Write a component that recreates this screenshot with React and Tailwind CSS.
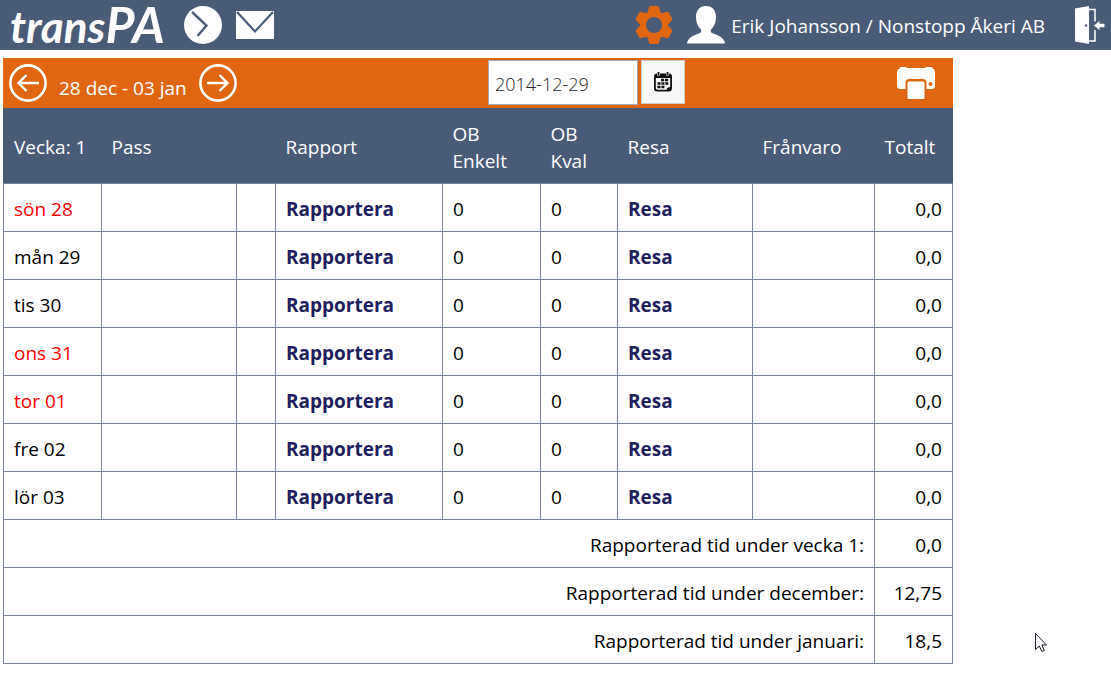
import { useState } from 'react'

const DAYS = [
  { label: 'sön 28', holiday: true },
  { label: 'mån 29' },
  { label: 'tis 30' },
  { label: 'ons 31', holiday: true },
  { label: 'tor 01', holiday: true },
  { label: 'fre 02' },
  { label: 'lör 03' },
]

const SUMMARY = [
  { label: 'Rapporterad tid under vecka 1:', total: '0,0' },
  { label: 'Rapporterad tid under december:', total: '12,75' },
  { label: 'Rapporterad tid under januari:', total: '18,5' },
]

const cell = 'border border-[#77839b] px-[10px] pt-[3px]'

function ClockIcon() {
  return (
    <svg width="38" height="38" viewBox="0 0 38 38">
      <circle cx="19" cy="19" r="19" fill="#fff" />
      <path d="M8 6 L22.5 19.5 L13.5 30" fill="none" stroke="#4a5b77" strokeWidth="2.4" />
    </svg>
  )
}

function MailIcon() {
  return (
    <svg width="38" height="28" viewBox="0 0 38 28">
      <rect width="38" height="28" fill="#fff" />
      <path d="M1 1 L19 20.5 L37 1" fill="none" stroke="#4a5b77" strokeWidth="2.2" />
    </svg>
  )
}

function GearIcon() {
  return (
    <svg width="36" height="38" viewBox="0 0 36 38">
      <g fill="#e16611">
        <path id="tooth" d="M11 8 L13 1.5 Q13.3 0 14.5 0 H21.5 Q22.7 0 23 1.5 L25 8 V30 L23 36.500 Q22.7 38 21.5 38 H14.500 Q13.3 38 13 36.5 L11 30 Z" />
        <use href="#tooth" transform="rotate(60 18 19)" />
        <use href="#tooth" transform="rotate(120 18 19)" />
        <circle cx="18" cy="19" r="14" />
      </g>
      <circle cx="18" cy="19" r="8" fill="#4a5b77" />
    </svg>
  )
}

function UserIcon() {
  return (
    <svg width="38" height="38" viewBox="0 0 38 38">
      <path
        d="M19 0 C25.5 0 29 4.5 29 11 C29 16 27.3 20.5 24.5 23 C23.2 24.2 23.5 26.5 25.5 27.3 C31 29.4 37 31 38 37.5 H0 C1 31 7 29.4 12.5 27.3 C14.5 26.5 14.8 24.2 13.5 23 C10.7 20.5 9 16 9 11 C9 4.5 12.5 0 19 0 Z"
        fill="#fff"
      />
    </svg>
  )
}

function DoorIcon() {
  return (
    <svg width="31" height="38" viewBox="0 0 31 38">
      <path d="M1 2.5 L15 0 V38 L1 35.5 Z" fill="#fff" />
      <circle cx="12" cy="19.5" r="1.2" fill="#4a5b77" />
      <path d="M15 3.5 H21 V15.5 M21 24 V35 H15" fill="none" stroke="#fff" strokeWidth="1.5" />
      <path d="M20 19.5 L25.5 15 V17.8 H30.5 V21.2 H25.5 V24 Z" fill="#fff" />
    </svg>
  )
}

function ArrowIcon({ right }) {
  return (
    <svg width="38" height="38" viewBox="0 0 38 38" fill="none" stroke="#fff">
      <circle cx="19" cy="19" r="17.6" strokeWidth="2.6" />
      <path
        d={right ? 'M8 19 H29 M20.5 11 L28.5 19 L20.5 27' : 'M30 19 H9 M17.5 11 L9.5 19 L17.5 27'}
        strokeWidth="2.4"
      />
    </svg>
  )
}

function CalendarIcon() {
  return (
    <svg width="18" height="20" viewBox="0 0 18 20">
      <path
        d="M3 1.500 H15 Q18 1.500 18 4.500 V16 Q18 19.500 14.500 19.500 H3 Q0 19.500 0 16.500 V4.500 Q0 1.500 3 1.500 Z M1.800 6 V16 Q1.800 17.800 3.600 17.800 H12.500 Q13 15.200 16.200 15 V6 Z"
        fill="#111"
        fillRule="evenodd"
      />
      <path d="M4.500 0 V3.500 M13.500 0 V3.500" stroke="#f8f8f8" strokeWidth="3" />
      <path d="M4.500 0 V3 M13.500 0 V3" stroke="#111" strokeWidth="1.800" />
      <path d="M7 8 H15 M3.500 11.500 H15 M3.500 15 H10.500" stroke="#111" strokeWidth="2.400" strokeDasharray="3 0.900" />
    </svg>
  )
}

function PrinterIcon() {
  return (
    <svg width="38" height="33" viewBox="0 0 38 33">
      <path
        d="M3 1 Q3 0 4 0 H8 Q9 0 10 1 H28 Q29 0 30 0 H34 Q35 0 35.5 1 Q38 2.5 38 5 V19 Q38 22 35 22 H29.5 V15.5 Q29.5 12 26 12 H12 Q8.5 12 8.5 15.5 V22 H3 Q0 22 0 19 V5 Q0 2.5 3 1 Z"
        fill="#fff"
      />
      <circle cx="33.5" cy="17" r="2" fill="#e16611" />
      <rect x="10.5" y="14.5" width="17" height="17.5" rx="1.5" fill="#fff" />
    </svg>
  )
}

function TopBar() {
  return (
    <header className="flex h-[50px] items-center justify-between bg-[#4a5b77] pl-[10px] pr-[6px] text-white">
      <div className="flex items-center">
        <a href="#" className="flex w-[174px] items-baseline font-['Lato',sans-serif] text-[44px] leading-[56px] font-bold italic">
          trans<span className="text-[50px]">PA</span>
        </a>
        <a href="#tid" aria-label="Tid" className="mr-[14px]"><ClockIcon /></a>
        <a href="#meddelanden" aria-label="Meddelanden"><MailIcon /></a>
      </div>
      <div className="flex items-center">
        <a href="#installningar" aria-label="Inställningar" className="mr-[15px]"><GearIcon /></a>
        <a href="#profil" className="mr-[29px] flex items-center gap-[6px]">
          <UserIcon />
          <span className="pt-[2px]">Erik Johansson / Nonstopp Åkeri AB</span>
        </a>
        <a href="#logga-ut" aria-label="Logga ut"><DoorIcon /></a>
      </div>
    </header>
  )
}

function WeekBar() {
  const [date, setDate] = useState('2014-12-29')

  return (
    <div className="flex h-[50px] items-center bg-[#e16611] text-white">
      <div className="flex w-1/2 items-end gap-3 pl-[6px]">
        <button type="button" aria-label="Föregående vecka"><ArrowIcon /></button>
        <span>28 dec - 03 jan</span>
        <button type="button" aria-label="Nästa vecka"><ArrowIcon right /></button>
      </div>
      <div className="flex flex-1 gap-[3px] pb-px pl-[10px]">
        <input
          type="text"
          aria-label="Datum"
          value={date}
          onChange={(e) => setDate(e.target.value)}
          className="h-[45px] w-[150px] border border-[#a0aabb] bg-white px-[6px] pt-[2px] text-lg font-light text-[#222]"
        />
        <button
          type="button"
          aria-label="Välj datum"
          className="flex h-11 w-11 items-center justify-center border border-[#cccccc] bg-[#f8f8f8]"
        >
          <CalendarIcon />
        </button>
      </div>
      <button type="button" aria-label="Skriv ut" className="mr-[18px]"><PrinterIcon /></button>
    </div>
  )
}

function WeekTable() {
  return (
    <table className="w-full table-fixed border-collapse">
      <colgroup>
        <col className="w-[98px]" />
        <col className="w-[135px]" />
        <col className="w-[39px]" />
        <col className="w-[167px]" />
        <col className="w-[98px]" />
        <col className="w-[77px]" />
        <col className="w-[135px]" />
        <col className="w-[122px]" />
        <col className="w-[78px]" />
      </colgroup>
      <thead>
        <tr className="h-[75px] border border-[#4a5b77] bg-[#4a5b77] text-left leading-[27px] text-white [&>th]:px-[10px] [&>th]:pt-[3px] [&>th]:font-normal">
          <th className="whitespace-nowrap">Vecka: 1</th>
          <th>Pass</th>
          <th></th>
          <th>Rapport</th>
          <th>OB Enkelt</th>
          <th>OB Kval</th>
          <th>Resa</th>
          <th>Frånvaro</th>
          <th>Totalt</th>
        </tr>
      </thead>
      <tbody>
        {DAYS.map((d) => (
          <tr key={d.label} className="h-12">
            <td className={`${cell} ${d.holiday ? 'text-[#ff0000]' : ''}`}>{d.label}</td>
            <td className={cell}></td>
            <td className={cell}></td>
            <td className={cell}><a href="#rapportera" className="font-bold text-[#20205f]">Rapportera</a></td>
            <td className={cell}>0</td>
            <td className={cell}>0</td>
            <td className={cell}><a href="#resa" className="font-bold text-[#20205f]">Resa</a></td>
            <td className={cell}></td>
            <td className={`${cell} text-right`}>0,0</td>
          </tr>
        ))}
        {SUMMARY.map((s) => (
          <tr key={s.label} className="h-12 text-right">
            <td colSpan={8} className={cell}>{s.label}</td>
            <td className={cell}>{s.total}</td>
          </tr>
        ))}
      </tbody>
    </table>
  )
}

export default function App() {
  return (
    <div className="min-h-screen bg-white font-['Open_Sans',sans-serif] text-[19px] leading-[27px] text-black">
      <TopBar />
      <main className="mt-2 ml-[3px] max-w-[950px]">
        <WeekBar />
        <WeekTable />
      </main>

      {/* Mouse pointer */}
      <svg className="absolute top-[633px] left-[1035px]" width="12" height="20" viewBox="0 0 12 20">
        <path
          d="M0.5 0.5 V16.5 L4.3 13 L6.8 18.5 L9.3 17.5 L6.9 12 H11.5 Z"
          fill="#fff"
          stroke="#1a1a2a"
        />
      </svg>
    </div>
  )
}
